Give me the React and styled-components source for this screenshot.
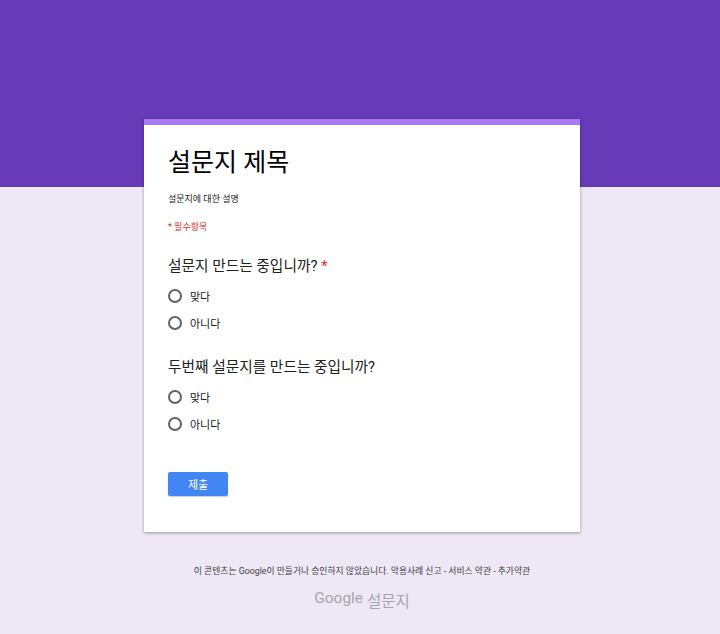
import styled, { createGlobalStyle } from 'styled-components';

const GlobalStyle = createGlobalStyle`
  html, body {
    margin: 0;
    padding: 0;
  }
  body {
    font-family: Roboto, "Noto Sans CJK KR", sans-serif;
    background: linear-gradient(#673ab7 0, #673ab7 187px, #ede7f6 187px);
    min-height: 634px;
    color: #212121;
  }
`;

const Page = styled.div`
  display: flex;
  flex-direction: column;
  align-items: center;
  padding-top: 119px;
  padding-left: 4px;
`;

const Card = styled.form`
  width: 436px;
  box-sizing: border-box;
  background: #fff;
  border-top: 6px solid #a77bf3;
  box-shadow: 0 1px 3px rgba(0, 0, 0, 0.35);
  padding: 20px 24px 36px;
  display: flex;
  flex-direction: column;
`;

const Title = styled.h1`
  margin: 0;
  font-size: 25px;
  font-weight: 400;
  line-height: 36px;
  color: #000;
`;

const Description = styled.p`
  margin: 11px 0 0;
  font-size: 9px;
  line-height: 14px;
  color: #212121;
`;

const Required = styled.p`
  margin: 14px 0 0;
  font-size: 9px;
  line-height: 14px;
  color: #d93025;
`;

const Question = styled.fieldset`
  border: 0;
  margin: ${(p) => p.$first ? '22px' : '21px'} 0 0;
  padding: 0;
  display: flex;
  flex-direction: column;
`;

const QuestionTitle = styled.legend`
  padding: 0;
  font-size: 14.7px;
  line-height: 20px;
  color: #212121;
  margin-bottom: 6px;
`;

const Star = styled.span`
  color: #d93025;
  margin-left: 4px;
`;

const Option = styled.label`
  display: flex;
  align-items: center;
  gap: 8px;
  height: 27px;
  font-size: 11px;
  color: #212121;
`;

const Radio = styled.span`
  width: 14px;
  height: 14px;
  box-sizing: border-box;
  border: 2px solid #5f6368;
  border-radius: 50%;
`;

const Submit = styled.button`
  align-self: flex-start;
  margin-top: 35px;
  width: 60px;
  height: 24px;
  border: 0;
  border-radius: 2px;
  background: #4285f4;
  box-shadow: 0 1px 1px rgba(0, 0, 0, 0.2);
  color: #fff;
  font-family: inherit;
  font-size: 11px;
  cursor: pointer;
`;

const Footer = styled.footer`
  display: flex;
  flex-direction: column;
  align-items: center;
  margin-top: 33px;
`;

const Notice = styled.p`
  margin: 0;
  font-size: 8.8px;
  line-height: 12px;
  color: #424242;
`;

const Brand = styled.div`
  margin-top: 12px;
  font-size: 15.5px;
  color: #a8a5ad;
  display: flex;
  gap: 4px;
`;

const questions = [
  { title: '설문지 만드는 중입니까?', required: true },
  { title: '두번째 설문지를 만드는 중입니까?', required: false },
];

export default function App() {
  return (
    <>
      <GlobalStyle />
      <Page>
        <Card onSubmit={(e) => e.preventDefault()}>
          <Title>설문지 제목</Title>
          <Description>설문지에 대한 설명</Description>
          <Required>* 필수항목</Required>
          {questions.map((q, i) => (
            <Question key={q.title} $first={i === 0}>
              <QuestionTitle>
                {q.title}
                {q.required && <Star>*</Star>}
              </QuestionTitle>
              <Option>
                <Radio />
                맞다
              </Option>
              <Option>
                <Radio />
                아니다
              </Option>
            </Question>
          ))}
          <Submit type="submit">제출</Submit>
        </Card>
        <Footer>
          <Notice>
            이 콘텐츠는 Google이 만들거나 승인하지 않았습니다. 악용사례 신고 - 서비스 약관 - 추가약관
          </Notice>
          <Brand>
            <span>Google</span>
            <span>설문지</span>
          </Brand>
        </Footer>
      </Page>
    </>
  );
}
